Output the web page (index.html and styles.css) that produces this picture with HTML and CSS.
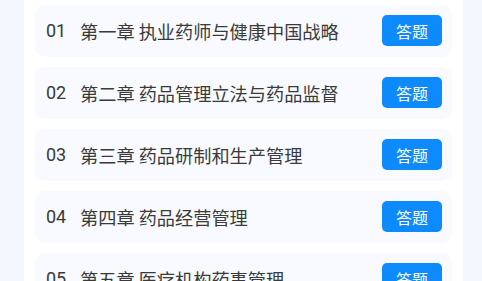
FILE: index.html
```html
<!DOCTYPE html>
<html lang="zh">
<head>
<meta charset="utf-8">
<link rel="stylesheet" href="styles.css">
</head>
<body>
<div class="page">
  <div class="panel">
    <div class="card"><span class="num">01</span><span class="title">第一章 执业药师与健康中国战略</span><span class="btn">答题</span></div>
    <div class="card"><span class="num">02</span><span class="title">第二章 药品管理立法与药品监督</span><span class="btn">答题</span></div>
    <div class="card"><span class="num">03</span><span class="title">第三章 药品研制和生产管理</span><span class="btn">答题</span></div>
    <div class="card"><span class="num">04</span><span class="title">第四章 药品经营管理</span><span class="btn">答题</span></div>
    <div class="card"><span class="num">05</span><span class="title">第五章 医疗机构药事管理</span><span class="btn">答题</span></div>
  </div>
</div>
</body>
</html>
```
FILE: styles.css
```css
html, body {
  margin: 0;
  padding: 0;
  width: 482px;
  height: 281px;
  overflow: hidden;
  background: #f4f7fd;
  font-family: "Noto Sans CJK SC", "Noto Sans", sans-serif;
}
.page {
  padding: 0 19px 0 24px;
  height: 281px;
}
.panel {
  background: #ffffff;
  height: 281px;
  padding: 5px 11px 0 11px;
  display: flex;
  flex-direction: column;
  gap: 10px;
  box-sizing: border-box;
  overflow: hidden;
}
.card {
  flex: 0 0 52px;
  height: 52px;
  background: #f8faff;
  border-radius: 10px;
  display: flex;
  align-items: center;
  padding: 0 10px 0 11px;
  box-sizing: border-box;
}
.num {
  width: 34px;
  font-family: "Roboto", "Noto Sans", sans-serif;
  font-size: 18px;
  color: #3a3a3a;
  margin-top: -1px;
}
.title {
  flex: 1;
  font-size: 18.2px;
  color: #3a3a3a;
  white-space: nowrap;
  margin-top: -1px;
}
.btn {
  width: 60px;
  height: 31px;
  background: #0d8bfd;
  border-radius: 5px;
  color: #ffffff;
  font-size: 16px;
  display: flex;
  align-items: center;
  justify-content: center;
  margin-top: -1px;
}
```
